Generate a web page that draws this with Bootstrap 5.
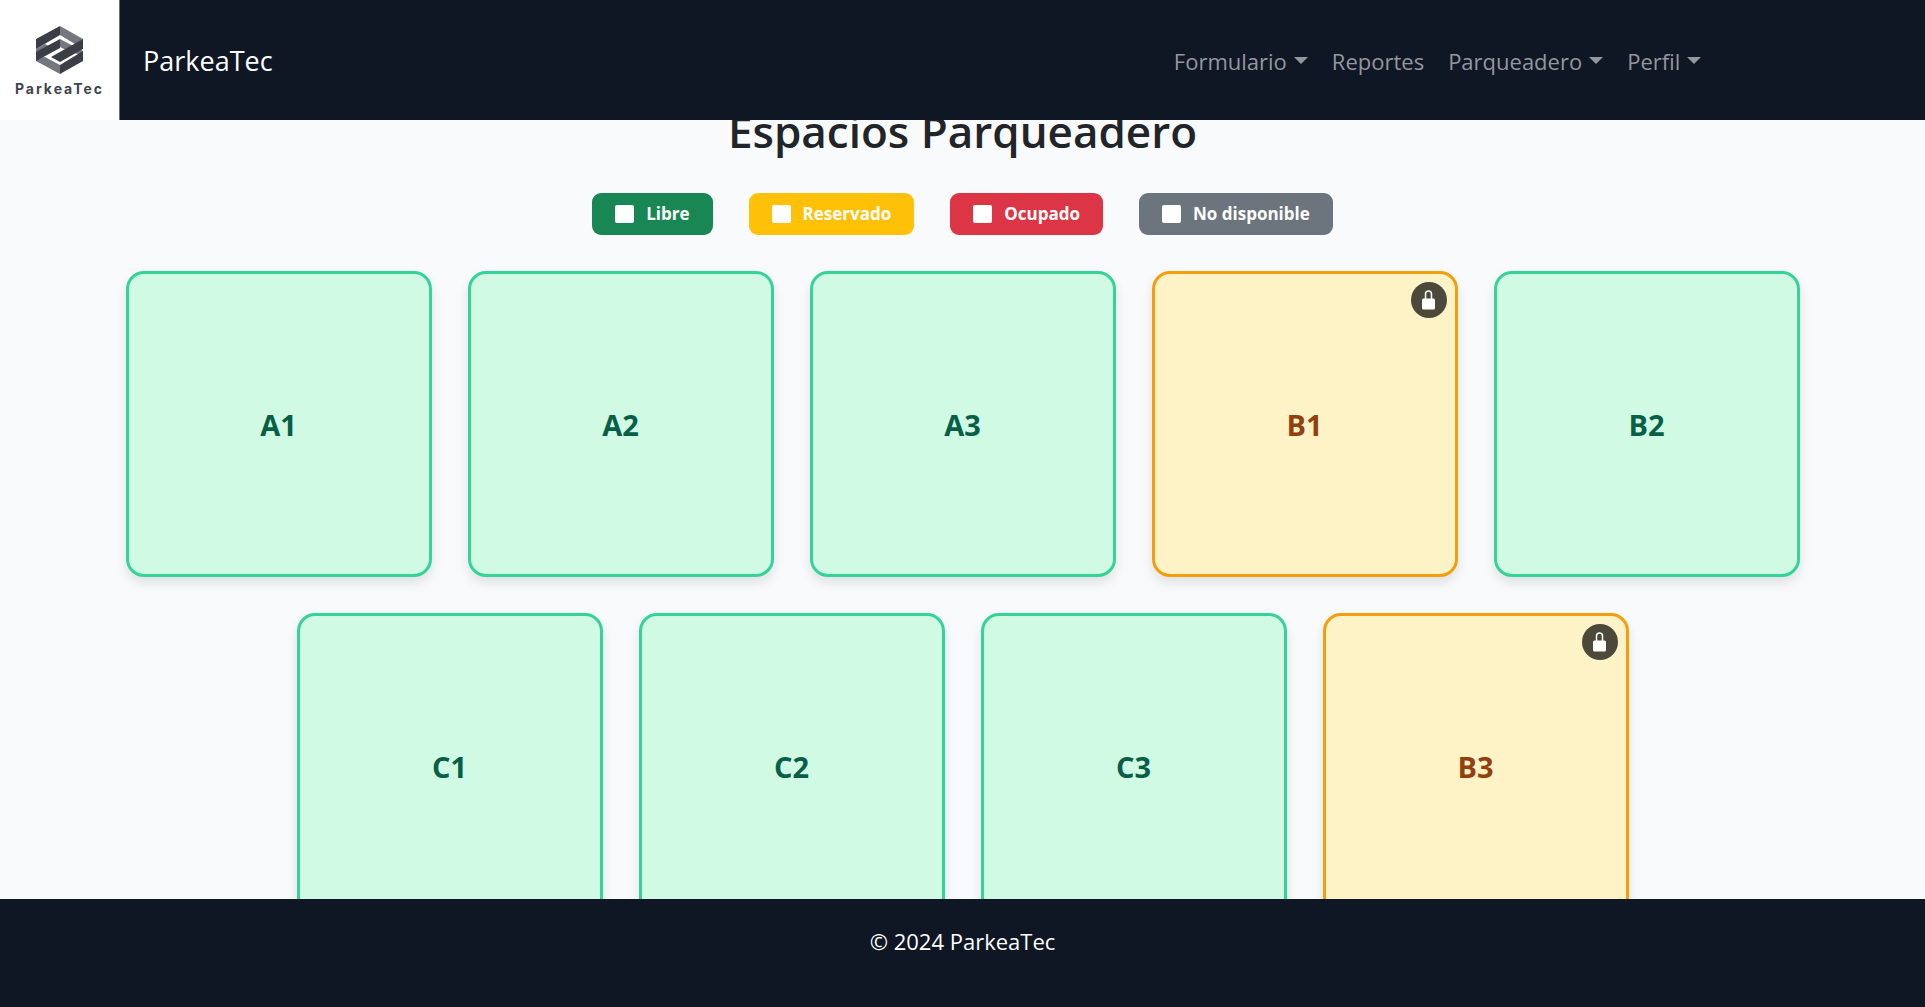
<!DOCTYPE html>
<html lang="es">
<head>
<meta charset="utf-8">
<meta name="viewport" content="width=device-width, initial-scale=1">
<title>ParkeaTec</title>
<link href="https://cdn.jsdelivr.net/npm/bootstrap@5.3.0/dist/css/bootstrap.min.css" rel="stylesheet">
<style>
  html { scrollbar-width: none; }
  body { font-family: "Open Sans", "Noto Sans", sans-serif; font-size: 22px; line-height: 36px; background: #f8fafc; }
  .bar-dark { background: #0f1624; }
  .topbar { height: 120px; }
  .logo-box { width: 120px; height: 120px; padding-top: 2px; gap: 6px; background: #fff; border-right: 1px solid #6c757d; }
  .logo-name { font: 700 14px/16px Inter, sans-serif; letter-spacing: 2px; color: #42454d; }
  .brand-name { font-size: 27px; line-height: 40px; margin-left: 23px; padding-top: 2px; }
  .menu { --bs-nav-link-padding-y: 12px; margin-right: 11%; padding-top: 2px; }
  .topbar .menu .nav-link { padding-left: 12px; padding-right: 12px; color: #94979e; }
  .menu .dropdown-toggle::after { margin-left: 7px; border-width: 7px 7px 0; }
  .main-area { padding: 102px 36px 144px; }
  .page-title { font-size: 44px; line-height: 58px; font-weight: 600; margin-bottom: 33px; }
  .legend, .spots { gap: 36px; }
  .legend { margin-bottom: 36px; }
  .tag { display: flex; align-items: center; gap: 12px; height: 42px; padding: 0 23px; border-radius: 9px; color: #fff; font-size: 17px; font-weight: 700; line-height: 24px; }
  .tag-box { width: 19px; height: 18px; border-radius: 2px; background: #fff; }
  .spots { max-width: 1700px; margin: 0 auto; }
  .spot { width: 306px; aspect-ratio: 1; padding-top: 2px; border: 3px solid; border-radius: 18px; font-size: 29px; font-weight: 700; box-shadow: 0 6px 12px rgba(0, 0, 0, .1); }
  .spot-free { background: #d1fae5; border-color: #34d399; color: #065f46; }
  .spot-held { background: #fef3c7; border-color: #f59e0b; color: #92400e; }
  .lock { top: 8px; right: 8px; width: 36px; height: 36px; background: rgba(0, 0, 0, .7); }
</style>
</head>
<body>
<nav class="navbar navbar-expand fixed-top bar-dark topbar p-0" data-bs-theme="dark">
  <a class="navbar-brand d-flex align-items-center p-0 m-0 text-white" href="#">
    <span class="logo-box d-flex flex-column align-items-center justify-content-center">
      <svg width="48" height="49" viewBox="0 0 48 49" aria-hidden="true">
        <path fill="#74777d" d="M24 0 47 13 47 16 39 18 24 9zM24 13 39 21 32 25 24 21zM0 23 9 18 15 21 0 29zM0 32 9 31 24 39V48L0 35zM39 21 47 25 47 30 36 26z"/>
        <path fill="#3b3e47" d="M24 0 0 13V23L24 9zM24 13 0 26V35L24 22zM47 13V23L24 36 15 31zM47 25V35L24 48V39z"/>
      </svg>
      <span class="logo-name">ParkeaTec</span>
    </span>
    <span class="brand-name">ParkeaTec</span>
  </a>
  <ul class="navbar-nav ms-auto menu">
    <li class="nav-item dropdown"><a class="nav-link dropdown-toggle" href="#" role="button" data-bs-toggle="dropdown">Formulario</a></li>
    <li class="nav-item"><a class="nav-link" href="#">Reportes</a></li>
    <li class="nav-item dropdown"><a class="nav-link dropdown-toggle" href="#" role="button" data-bs-toggle="dropdown">Parqueadero</a></li>
    <li class="nav-item dropdown"><a class="nav-link dropdown-toggle" href="#" role="button" data-bs-toggle="dropdown">Perfil</a></li>
  </ul>
</nav>
<main class="main-area">
  <h1 class="page-title text-center">Espacios Parqueadero</h1>
  <div class="legend d-flex flex-wrap justify-content-center">
    <span class="tag bg-success"><span class="tag-box"></span>Libre</span>
    <span class="tag bg-warning"><span class="tag-box"></span>Reservado</span>
    <span class="tag bg-danger"><span class="tag-box"></span>Ocupado</span>
    <span class="tag bg-secondary"><span class="tag-box"></span>No disponible</span>
  </div>
  <div class="spots d-flex flex-wrap justify-content-center">
    <button type="button" class="spot spot-free">A1</button>
    <button type="button" class="spot spot-free">A2</button>
    <button type="button" class="spot spot-free">A3</button>
    <button type="button" class="spot spot-held position-relative">B1
      <span class="lock position-absolute rounded-circle d-flex align-items-center justify-content-center"><svg width="13" height="20" viewBox="0 0 13 20" aria-hidden="true"><path fill="none" stroke="#fff" stroke-width="1.5" d="M3.500 9V4a3 3 0 0 1 6 0v5"/><rect y="8.500" width="13" height="11" rx="1.500" fill="#fff"/></svg></span>
    </button>
    <button type="button" class="spot spot-free">B2</button>
    <button type="button" class="spot spot-free">C1</button>
    <button type="button" class="spot spot-free">C2</button>
    <button type="button" class="spot spot-free">C3</button>
    <button type="button" class="spot spot-held position-relative">B3
      <span class="lock position-absolute rounded-circle d-flex align-items-center justify-content-center"><svg width="13" height="20" viewBox="0 0 13 20" aria-hidden="true"><path fill="none" stroke="#fff" stroke-width="1.5" d="M3.500 9V4a3 3 0 0 1 6 0v5"/><rect y="8.500" width="13" height="11" rx="1.500" fill="#fff"/></svg></span>
    </button>
  </div>
</main>
<footer class="fixed-bottom bar-dark text-white text-center py-4">
  <p class="mb-4">© 2024 ParkeaTec</p>
</footer>
<script src="https://cdn.jsdelivr.net/npm/bootstrap@5.3.0/dist/js/bootstrap.bundle.min.js"></script>
</body>
</html>
